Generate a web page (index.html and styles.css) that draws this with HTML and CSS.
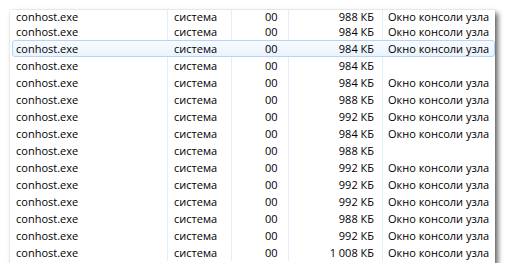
FILE: index.html
```html
<!DOCTYPE html>
<html>
<head>
<meta charset="utf-8">
<link rel="stylesheet" href="styles.css">
</head>
<body>
<div class="panel">
  <div class="list">
    <div class="row first"><span class="c1">conhost.exe</span><span class="c2">система</span><span class="c3">00</span><span class="c4">988 КБ</span><span class="c5">Окно консоли узла</span></div>
    <div class="row"><span class="c1">conhost.exe</span><span class="c2">система</span><span class="c3">00</span><span class="c4">984 КБ</span><span class="c5">Окно консоли узла</span></div>
    <div class="row sel"><span class="c1">conhost.exe</span><span class="c2">система</span><span class="c3">00</span><span class="c4">984 КБ</span><span class="c5">Окно консоли узла</span></div>
    <div class="row"><span class="c1">conhost.exe</span><span class="c2">система</span><span class="c3">00</span><span class="c4">984 КБ</span><span class="c5"></span></div>
    <div class="row"><span class="c1">conhost.exe</span><span class="c2">система</span><span class="c3">00</span><span class="c4">984 КБ</span><span class="c5">Окно консоли узла</span></div>
    <div class="row"><span class="c1">conhost.exe</span><span class="c2">система</span><span class="c3">00</span><span class="c4">988 КБ</span><span class="c5">Окно консоли узла</span></div>
    <div class="row"><span class="c1">conhost.exe</span><span class="c2">система</span><span class="c3">00</span><span class="c4">992 КБ</span><span class="c5">Окно консоли узла</span></div>
    <div class="row"><span class="c1">conhost.exe</span><span class="c2">система</span><span class="c3">00</span><span class="c4">984 КБ</span><span class="c5">Окно консоли узла</span></div>
    <div class="row"><span class="c1">conhost.exe</span><span class="c2">система</span><span class="c3">00</span><span class="c4">988 КБ</span><span class="c5"></span></div>
    <div class="row"><span class="c1">conhost.exe</span><span class="c2">система</span><span class="c3">00</span><span class="c4">992 КБ</span><span class="c5">Окно консоли узла</span></div>
    <div class="row"><span class="c1">conhost.exe</span><span class="c2">система</span><span class="c3">00</span><span class="c4">992 КБ</span><span class="c5">Окно консоли узла</span></div>
    <div class="row"><span class="c1">conhost.exe</span><span class="c2">система</span><span class="c3">00</span><span class="c4">992 КБ</span><span class="c5">Окно консоли узла</span></div>
    <div class="row"><span class="c1">conhost.exe</span><span class="c2">система</span><span class="c3">00</span><span class="c4">988 КБ</span><span class="c5">Окно консоли узла</span></div>
    <div class="row"><span class="c1">conhost.exe</span><span class="c2">система</span><span class="c3">00</span><span class="c4">992 КБ</span><span class="c5">Окно консоли узла</span></div>
    <div class="row"><span class="c1">conhost.exe</span><span class="c2">система</span><span class="c3">00</span><span class="c4">1 008 КБ</span><span class="c5">Окно консоли узла</span></div>
  </div>
</div>
</body>
</html>
```
FILE: styles.css
```css
html, body {
  margin: 0;
  padding: 0;
  background: #ffffff;
}
body {
  padding: 10px 0 0 10px;
  font-family: "Open Sans", "DejaVu Sans", sans-serif;
  font-size: 11px;
  color: #000;
}
.panel {
  width: 485px;
  height: 253px;
  background: #fff;
  overflow: hidden;
  box-shadow: 0 0 1px rgba(0,0,0,0.25), 3px 3px 5px rgba(0,0,0,0.6);
}
.row {
  display: grid;
  grid-template-columns: 158px 64px 57px 94px 112px;
  height: 17px;
  line-height: 17px;
  box-sizing: border-box;
  white-space: nowrap;
}
.row.first {
  height: 13px;
  line-height: 13px;
}
.row > span {
  border-right: 1px solid #e3edf9;
  box-sizing: border-box;
}
.row > span:last-child {
  border-right: none;
}
.c1 { padding-left: 6px; }
.c2 { padding-left: 6px; }
.c3 { padding-left: 33px; }
.c4 { text-align: right; padding-right: 8px; }
.c5 { padding-left: 5px; }
.row.sel {
  margin-left: 2px;
  grid-template-columns: 155px 64px 57px 94px 111px;
  border: 1px solid #b7d4f7;
  border-radius: 3px;
  background: linear-gradient(#f7fbff, #eaf3fd);
  line-height: 16px;
}
.sel > span { border-right-color: transparent; }
.sel .c1 { padding-left: 3px; }
```
